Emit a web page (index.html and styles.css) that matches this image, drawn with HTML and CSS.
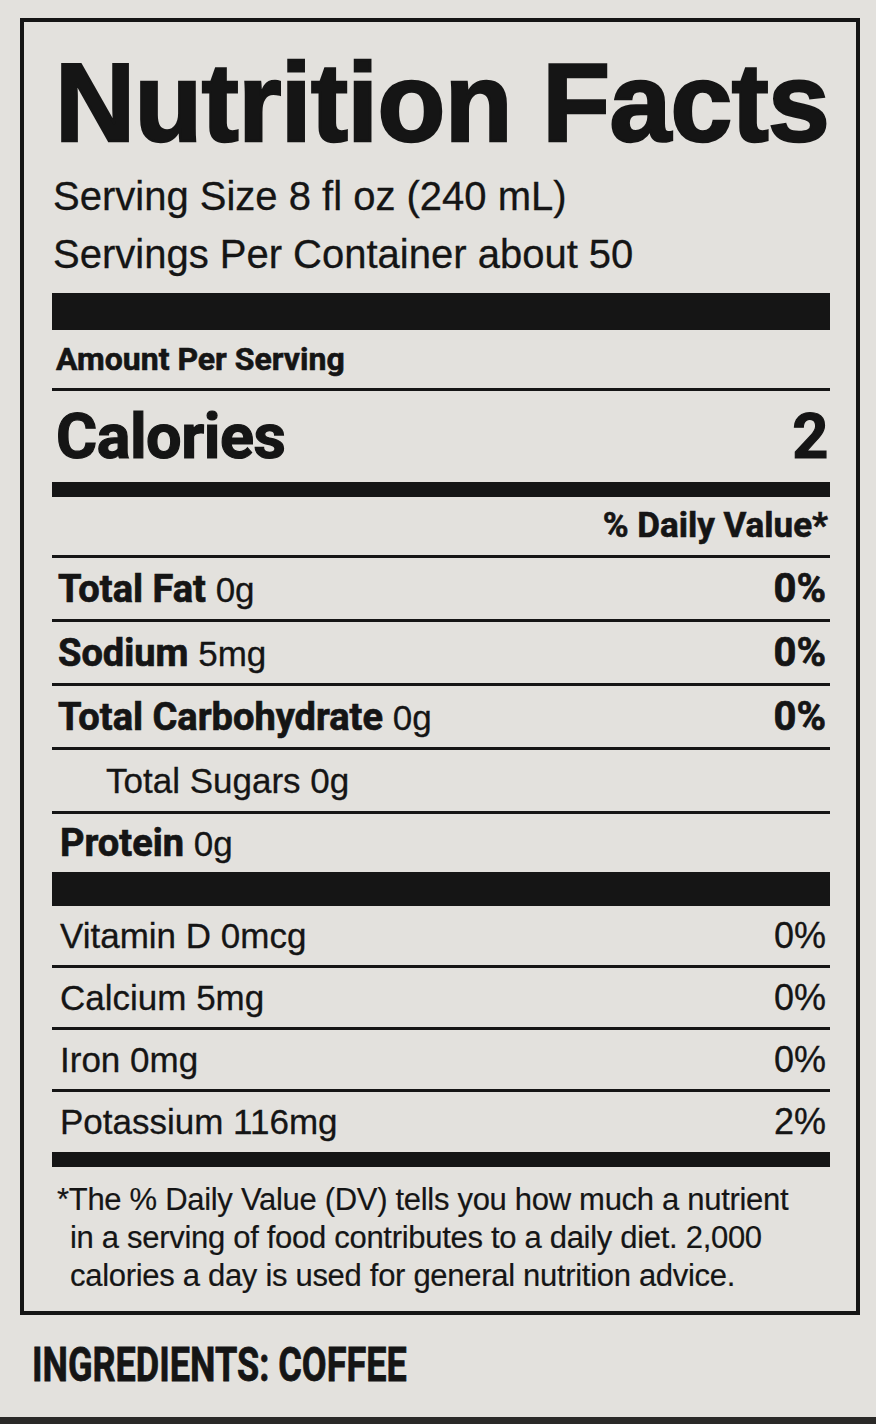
FILE: index.html
```html
<!DOCTYPE html>
<html lang="en">
<head>
<meta charset="utf-8">
<title>Nutrition Facts</title>
<link rel="stylesheet" href="styles.css">
</head>
<body>
<div class="page">
  <section class="label">
    <h1 class="title">Nutrition Facts</h1>
    <p class="serving">Serving Size 8 fl oz (240 mL)</p>
    <p class="serving">Servings Per Container about 50</p>
    <div class="bar bar-xl bar-top"></div>
    <div class="amount">Amount Per Serving</div>
    <div class="calories"><span>Calories</span><span>2</span></div>
    <div class="bar bar-md"></div>
    <div class="dv-head">% Daily Value*</div>
    <div class="row"><span><b>Total Fat</b> 0g</span><b class="pct">0%</b></div>
    <div class="row"><span><b>Sodium</b> 5mg</span><b class="pct">0%</b></div>
    <div class="row"><span><b>Total Carbohydrate</b> 0g</span><b class="pct">0%</b></div>
    <div class="row row-sub"><span>Total Sugars 0g</span></div>
    <div class="row row-last"><span><b>Protein</b> 0g</span></div>
    <div class="bar bar-lg"></div>
    <div class="row row-vit"><span>Vitamin D 0mcg</span><span class="pct">0%</span></div>
    <div class="row row-vit"><span>Calcium 5mg</span><span class="pct">0%</span></div>
    <div class="row row-vit"><span>Iron 0mg</span><span class="pct">0%</span></div>
    <div class="row row-vit row-vit-last"><span>Potassium 116mg</span><span class="pct">2%</span></div>
    <div class="bar bar-md"></div>
    <p class="foot">*The % Daily Value (DV) tells you how much a nutrient<br>in a serving of food contributes to a daily diet. 2,000<br>calories a day is used for general nutrition advice.</p>
  </section>
  <p class="ingredients">INGREDIENTS: COFFEE</p>
  <div class="edge"></div>
</div>
</body>
</html>
```

FILE: styles.css
```css
* { box-sizing: border-box; }
html, body { margin: 0; padding: 0; }
body {
  background: #e3e1dd;
  color: #151515;
  font-family: "Liberation Sans", Arial, sans-serif;
  width: 876px;
  height: 1424px;
  overflow: hidden;
}
.page {
  padding-top: 18px;
}
.label {
  margin-left: 20px;
  width: 840px;
  border: 4px solid #151515;
  padding: 25px 26px 16px 28px;
}
.title {
  margin: 0;
  font-family: "Liberation Sans", Arial, sans-serif;
  font-weight: 700;
  font-size: 111px;
  line-height: 112px;
  letter-spacing: -0.6px;
  padding-left: 3px;
  white-space: nowrap;
  -webkit-text-stroke: 2.5px #151515;
}
.serving {
  margin: 0;
  font-size: 40px;
  line-height: 58px;
  padding-left: 1px;
  white-space: nowrap;
  -webkit-text-stroke: 0.3px #151515;
}
.serving:first-of-type { margin-top: 8px; }
.bar { background: #151515; }
.bar-top { margin-top: 10px; }
.bar-xl { height: 37px; }
.bar-lg { height: 34px; }
.bar-md { height: 15px; }
.amount {
  font-family: Roboto, "Liberation Sans", sans-serif;
  font-weight: 700;
  font-size: 32px;
  line-height: 58px;
  height: 61px;
  border-bottom: 3px solid #151515;
  padding-left: 4px;
  -webkit-text-stroke: 0.6px #151515;
}
.calories {
  display: flex;
  justify-content: space-between;
  font-family: Roboto, "Liberation Sans", sans-serif;
  font-weight: 700;
  font-size: 63px;
  line-height: 91px;
  height: 91px;
  padding: 0 2px 0 4px;
  letter-spacing: -0.5px;
  -webkit-text-stroke: 1.2px #151515;
}
.dv-head {
  font-family: Roboto, "Liberation Sans", sans-serif;
  font-weight: 700;
  font-size: 35px;
  line-height: 58px;
  height: 61px;
  text-align: right;
  border-bottom: 3px solid #151515;
  padding-right: 2px;
  -webkit-text-stroke: 0.6px #151515;
}
.row {
  display: flex;
  justify-content: space-between;
  align-items: baseline;
  font-size: 35px;
  line-height: 61px;
  height: 64px;
  border-bottom: 3px solid #151515;
  padding: 0 4px 0 6px;
  white-space: nowrap;
  -webkit-text-stroke: 0.3px #151515;
}
.row b {
  font-family: Roboto, "Liberation Sans", sans-serif;
  font-weight: 700;
  font-size: 38px;
  -webkit-text-stroke: 0.7px #151515;
}
.row b.pct { font-size: 40px; }
.row-sub { padding-left: 54px; }
.row-last {
  height: 58px;
  line-height: 58px;
  border-bottom: 0;
  padding-left: 8px;
}
.row-vit {
  height: 62px;
  line-height: 59px;
  padding-left: 8px;
}
.row-vit-last {
  height: 60px;
  border-bottom: 0;
}
.row .pct { font-size: 36px; }
.foot {
  margin: 0;
  padding: 14px 0 0 18px;
  text-indent: -13px;
  font-size: 31px;
  line-height: 38px;
  letter-spacing: -0.3px;
  white-space: nowrap;
  -webkit-text-stroke: 0.2px #151515;
}
.ingredients {
  margin: 25px 0 0 32px;
  font-family: Roboto, "Liberation Sans", sans-serif;
  font-weight: 700;
  font-size: 49px;
  line-height: 49px;
  transform: scaleX(0.735);
  transform-origin: left center;
  white-space: nowrap;
  -webkit-text-stroke: 0.8px #151515;
}
.edge {
  margin-top: 28px;
  height: 10px;
  background: #2a2927;
}
```
